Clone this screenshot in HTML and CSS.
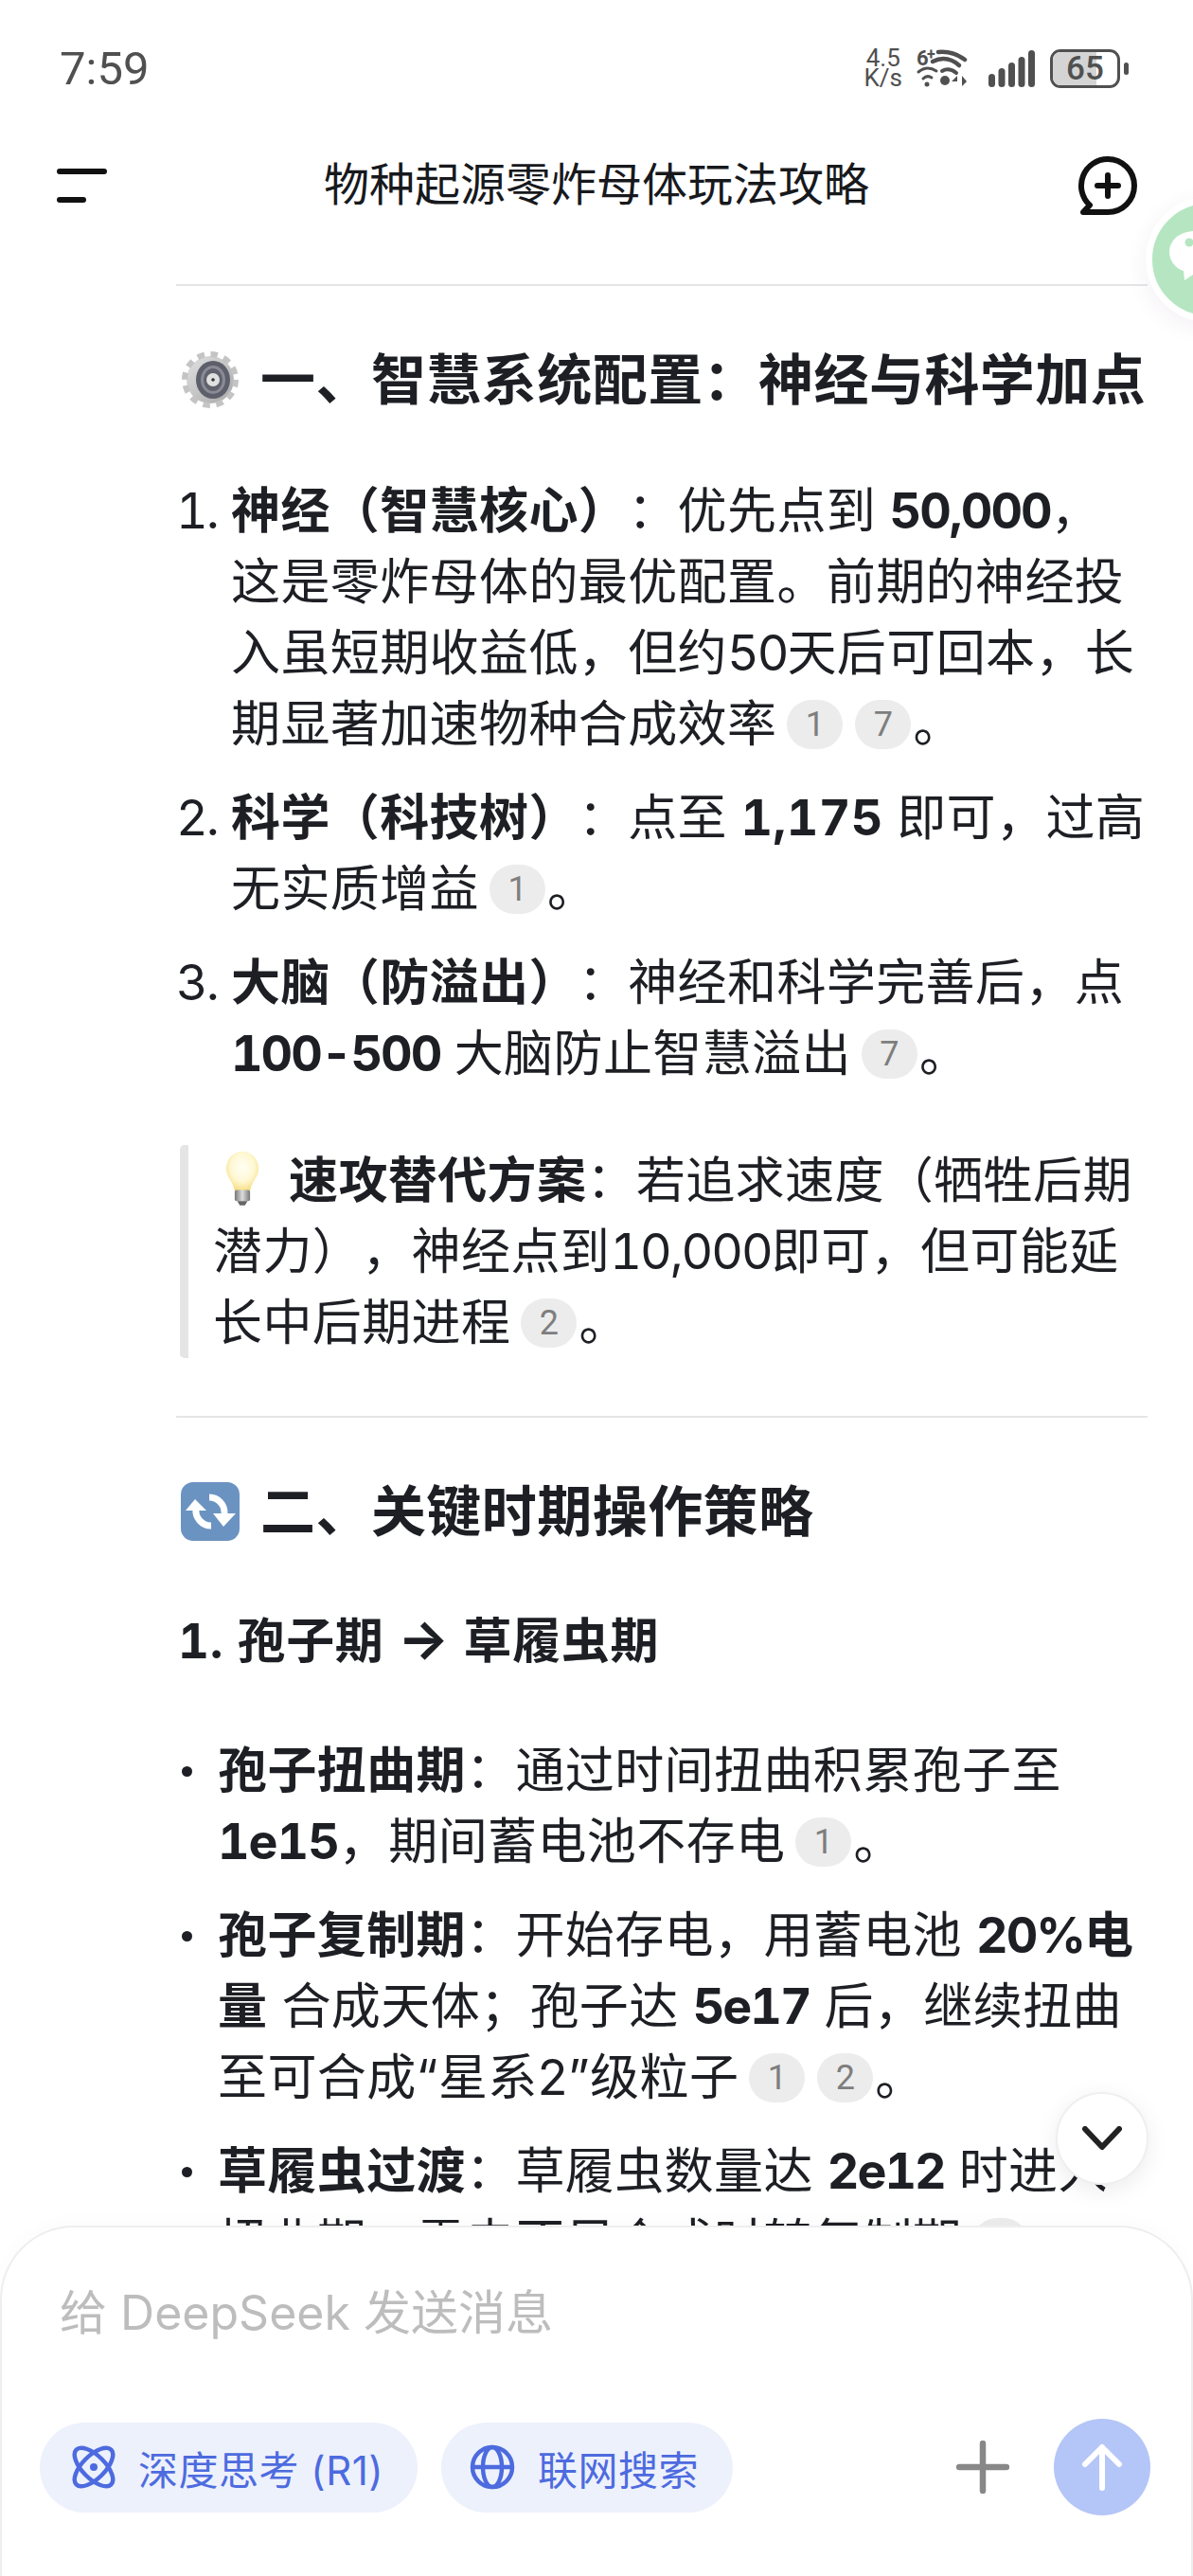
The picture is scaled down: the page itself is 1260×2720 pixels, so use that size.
FILE: index.html
```html
<!DOCTYPE html>
<html lang="zh-CN">
<head>
<meta charset="utf-8">
<title>物种起源零炸母体玩法攻略</title>
<link rel="stylesheet" href="styles.css">
</head>
<body>
<div class="phone">
  <div class="status">
    <span class="time">7:59</span>
    <div class="status-icons">
      <span class="speed"><span>4.5</span><span>K/s</span></span>
      <svg class="wifi" width="54" height="40" viewBox="0 0 54 40"><text x="0" y="17" class="six">6</text><text x="11" y="11" class="plus">+</text><g fill="none" stroke="#505050" stroke-linecap="round"><path d="M23 3 C33 2 43 5 51 11" stroke-width="4.5"/><path d="M17 13 C27 8 37 10 45 17" stroke-width="4.5"/><path d="M27 23 C32 20 37 21 42 25" stroke-width="4"/><path d="M2 24 C8 19 15 19 21 23" stroke-width="3"/><path d="M7 31 C10 28 13 28 16 30" stroke-width="3"/></g><circle cx="11" cy="37" r="2.5" fill="#505050"/><circle cx="30" cy="33" r="5" fill="#505050"/><path d="M43 28 L37 34 H43Z M48 28 V39 L53 34Z" fill="#505050"/></svg>
      <svg class="signal" width="49" height="39" viewBox="0 0 49 39"><g fill="#505050"><rect x="0" y="25" width="7" height="14" rx="3.5"/><rect x="10.500" y="19" width="7" height="20" rx="3.5"/><rect x="21" y="13" width="7" height="26" rx="3.5"/><rect x="31.500" y="7" width="7" height="32" rx="3.5"/><rect x="42" y="0" width="7" height="39" rx="3.5"/></g></svg>
      <div class="battery"><div class="battery-fill"></div><span class="battery-num">65</span></div>
      <span class="battery-tip"></span>
    </div>
  </div>

  <header class="topbar">
    <svg class="menu" width="56" height="36" viewBox="0 0 56 36"><path d="M6 3 H53 M6 33 H31" stroke="#111" stroke-width="6" stroke-linecap="round"/></svg>
    <h1 class="title">物种起源零炸母体玩法攻略</h1>
    <svg class="newchat" width="64" height="62" viewBox="0 0 64 62"><path d="M32 3 A28 28 0 1 1 32 59 H6 L13 51.600 A28 28 0 0 1 32 3 Z" fill="none" stroke="#111" stroke-width="6" stroke-linejoin="round"/><path d="M32 20 V42 M21 31 H43" stroke="#111" stroke-width="6" stroke-linecap="round"/></svg>
  </header>

  <main class="content">
    <hr class="rule rule-first">
    <h2 class="h2">
      <svg class="emoji" width="66" height="66" viewBox="0 0 66 66">
        <defs><linearGradient id="g1" x1="0" y1="0" x2="1" y2="1"><stop offset="0" stop-color="#e2e2e2"/><stop offset="1" stop-color="#a8a8a8"/></linearGradient></defs>
        <circle cx="33" cy="33" r="25" fill="url(#g1)"/>
        <circle cx="33" cy="33" r="27" fill="none" stroke="#c4c4c4" stroke-width="6" stroke-dasharray="7.500 6.640"/>
        <ellipse cx="36" cy="33" rx="18" ry="20" fill="#5d5f6b"/>
        <ellipse cx="36" cy="33" rx="13" ry="15" fill="#8a8b96"/>
        <ellipse cx="36" cy="33" rx="10" ry="12" fill="#5f616c"/>
        <circle cx="36" cy="33" r="7" fill="#e0e0e0"/>
        <circle cx="36" cy="33" r="1.800" fill="#333"/>
      </svg>
      <span>一、智慧系统配置：神经与科学加点</span>
    </h2>

    <ol class="olist">
      <li><b>神经（智慧核心）</b>：优先点到 <b class="num">50,000</b>，这是零炸母体的最优配置。前期的神经投入虽短期收益低，但约<span class="num">50</span>天后可回本，长期显著加速物种合成效率<span class="cite">1</span><span class="cite">7</span>。</li>
      <li><b>科学（科技树）</b>：点至 <b>1,175</b> 即可，过高无实质增益<span class="cite">1</span>。</li>
      <li><b>大脑（防溢出）</b>：神经和科学完善后，点 <b class="num">100-500</b> 大脑防止智慧溢出<span class="cite">7</span>。</li>
    </ol>

    <blockquote class="quote">
      <svg class="emoji-bulb" width="36" height="58" viewBox="0 0 40 64">
        <defs><radialGradient id="g2" cx=".5" cy=".4" r=".6"><stop offset="0" stop-color="#fffef5"/><stop offset=".6" stop-color="#fff8d4"/><stop offset="1" stop-color="#f6df85"/></radialGradient><linearGradient id="g3" x1="0" y1="0" x2="1" y2="0"><stop offset="0" stop-color="#777"/><stop offset=".5" stop-color="#ddd"/><stop offset="1" stop-color="#777"/></linearGradient></defs>
        <path d="M20 1 C31 1 39 10 39 21 C39 31 31 36 29 47 H11 C9 36 1 31 1 21 C1 10 9 1 20 1 Z" fill="url(#g2)"/>
        <rect x="11" y="46" width="18" height="13" rx="2" fill="url(#g3)"/>
        <path d="M14 59 H26 L23 64 H17 Z" fill="#666"/>
      </svg><b>速攻替代方案</b>：若追求速度（牺牲后期潜力），神经点到<span class="num">10,000</span>即可，但可能延长中后期进程<span class="cite">2</span>。
    </blockquote>

    <hr class="rule rule-second">
    <h2 class="h2">
      <svg class="emoji" width="66" height="66" viewBox="0 0 66 66">
        <rect x="2" y="2" width="62" height="62" rx="13" fill="#6b93c2"/>
        <g transform="translate(2 2)">
          <g fill="none" stroke="#fff" stroke-width="7"><path d="M16 28 A16 16 0 0 0 32 46"/><path d="M46 33 A16 16 0 0 0 30 16"/></g>
          <path d="M5 30 L15 18 L27 30 Z M58 33 L45 47 L34 33 Z" fill="#fff"/>
        </g>
      </svg>
      <span>二、关键时期操作策略</span>
    </h2>
    <h3 class="h3">1. 孢子期 <span class="arrow">→</span> 草履虫期</h3>
    <ul class="ulist">
      <li><b>孢子扭曲期</b>：通过时间扭曲积累孢子至 <b class="num num-mid">1e15</b>，期间蓄电池不存电<span class="cite">1</span>。</li>
      <li><b>孢子复制期</b>：开始存电，用蓄电池 <b><span class="num">20%</span>电量</b> 合成天体；孢子达 <b class="num">5e17</b> 后，继续扭曲至可合成“星系2”级粒子<span class="cite">1</span><span class="cite">2</span>。</li>
      <li><b>草履虫过渡</b>：草履虫数量达 <b class="num">2e12</b> 时进入扭曲期，需电不足合成时转复制期<span class="cite">1</span>。</li>
    </ul>
  </main>

  <button class="scroll-down" type="button" aria-label="向下滚动">
    <svg width="42" height="26" viewBox="0 0 42 26"><path d="M3 3 L21 22 L39 3" fill="none" stroke="#222" stroke-width="6" stroke-linecap="round" stroke-linejoin="round"/></svg>
  </button>

  <div class="float-ball">
    <svg width="56" height="56" viewBox="0 0 56 56"><path d="M28 1 C44 1 56 10 56 23 C56 36 44 45 28 45 L16 53 L15 43 C6 40 0 32 0 23 C0 10 12 1 28 1 Z" fill="#fff"/><circle cx="21" cy="13" r="4.500" fill="#b5e6c1"/></svg>
  </div>

  <footer class="composer">
    <div class="placeholder">给 DeepSeek 发送消息</div>
    <div class="actions">
      <div class="chip">
        <svg width="46" height="46" viewBox="0 0 46 46"><g fill="none" stroke="#4d6bdf" stroke-width="4.500"><ellipse cx="23" cy="23" rx="12" ry="26" transform="rotate(45 23 23)"/><ellipse cx="23" cy="23" rx="12" ry="26" transform="rotate(-45 23 23)"/></g><circle cx="23" cy="23" r="4" fill="#4d6bdf"/></svg>
        <span>深度思考 (R1)</span>
      </div>
      <div class="chip chip-web">
        <svg width="48" height="48" viewBox="0 0 48 48"><g fill="none" stroke="#4d6bdf" stroke-width="4.500"><circle cx="24" cy="24" r="21"/><ellipse cx="24" cy="24" rx="10" ry="21"/><path d="M3 24 H45"/></g></svg>
        <span>联网搜索</span>
      </div>
      <div class="spacer"></div>
      <svg class="plus-btn" width="56" height="56" viewBox="0 0 56 56"><path d="M28 3 V53 M3 28 H53" stroke="#888" stroke-width="6.500" stroke-linecap="round"/></svg>
      <div class="send">
        <svg width="44" height="50" viewBox="0 0 44 50"><path d="M22 47 V4 M4 22 L22 4 L40 22" fill="none" stroke="#fff" stroke-width="6" stroke-linecap="round" stroke-linejoin="round"/></svg>
      </div>
    </div>
  </footer>
</div>
</body>
</html>
```
FILE: styles.css
```css
* { box-sizing: border-box; }
html, body { margin: 0; padding: 0; }
body { background: #fff; font-family: "Inter", "Noto Sans CJK SC", sans-serif; color: #1d1f24; text-spacing-trim: space-all; }
.phone { position: relative; width: 1260px; height: 2720px; overflow: hidden; background: #fff; }

.status { display: flex; align-items: center; justify-content: space-between; height: 144px; padding: 0 68px 0 63px; }
.time { font-family: "Roboto", sans-serif; font-size: 49px; color: #505050; }
.status-icons { display: flex; align-items: center; color: #505050; }
.speed { display: flex; flex-direction: column; font-family: "Roboto", sans-serif; font-size: 26px; line-height: 21px; align-items: center; margin-right: 15px; }
.wifi { overflow: visible; }
.six { font: 700 22px "Roboto", sans-serif; fill: #505050; }
.plus { font: 700 16px "Roboto", sans-serif; fill: #505050; }
.signal { margin-left: 22px; }
.battery { position: relative; margin-left: 16px; width: 74px; height: 41px; border: 3.5px solid #505050; border-radius: 11px; overflow: hidden; display: flex; align-items: center; justify-content: center; }
.battery-fill { position: absolute; left: 0; top: 0; bottom: 0; width: 68%; background: #d4d4d4; }
.battery-num { position: relative; font-family: "Roboto", sans-serif; font-size: 35px; font-weight: 500; color: #505050; line-height: 1; }
.battery-tip { display: block; margin-left: 4px; width: 5px; height: 13px; border-radius: 3px; background: #505050; }

.topbar { display: flex; align-items: center; justify-content: space-between; height: 104px; padding: 0 58px 0 57px; }
.title { margin: 0 0 10px 9px; font-size: 48px; font-weight: 400; color: #17191d; }

.content { padding: 0 48px 0 186px; }
.rule { border: 0; height: 2px; background: #e5e5e7; margin: 0; }
.rule-first { margin-top: 52px; }
.rule-second { margin-top: 61px; }

.h2 { margin: 64px 0 0 3px; display: flex; align-items: center; gap: 20px; font-size: 58px; font-weight: 700; line-height: 70px; letter-spacing: .45px; white-space: nowrap; }
.emoji { flex: none; }

.olist { list-style: none; counter-reset: n; margin: 66px 0 0; padding: 0 0 0 58px; font-size: 52px; line-height: 75px; letter-spacing: .4px; font-variant-numeric: tabular-nums; }
.olist li { counter-increment: n; position: relative; margin-bottom: 24px; }
.olist li::before { content: counter(n) "."; position: absolute; left: -58px; top: 0; letter-spacing: -2px; }
b { font-weight: 700; }
.num { letter-spacing: -2px; font-variant-numeric: tabular-nums; }
.num-mid { letter-spacing: -1px; }

.cite { display: inline-flex; align-items: center; justify-content: center; width: 59px; height: 52px; margin: -10px 2px -10px 11px; vertical-align: 6px; border-radius: 26px; background: #ececec; color: #7e7e7e; font-size: 36px; line-height: 1; letter-spacing: 0; font-family: "Roboto", sans-serif; }

.quote { margin: 59px 0 0 4px; padding: 0 0 0 26px; border-left: 9px solid #e5e5e5; border-radius: 5px; font-size: 52px; line-height: 75px; letter-spacing: .4px; }
.emoji-bulb { vertical-align: -8px; margin: 0 31px 0 13px; }

.h3 { margin: 67px 0 0 2px; font-size: 51px; line-height: 70px; font-weight: 700; letter-spacing: .7px; font-variant-numeric: tabular-nums; }
.arrow { font-size: 57px; line-height: 1; }
.ulist { list-style: none; margin: 64px 0 0; padding: 0 0 0 44px; font-size: 52px; line-height: 75px; letter-spacing: .4px; }
.ulist li { position: relative; margin-bottom: 24px; }
.ulist li::before { content: ""; position: absolute; left: -38px; top: 33px; width: 11px; height: 11px; border-radius: 50%; background: #1d1f24; }

.scroll-down { position: absolute; left: 1115px; top: 2209px; width: 98px; height: 98px; border-radius: 50%; background: #fff; border: 2px solid #efefef; box-shadow: 0 6px 24px rgba(0,0,0,.08); display: flex; align-items: center; justify-content: center; padding: 0; z-index: 3; }

.float-ball { position: absolute; left: 1210px; top: 208px; width: 132px; height: 132px; border-radius: 50%; background: #b5e6c1; border: 7px solid #fff; box-shadow: 0 6px 22px rgba(120,70,120,.08); padding: 28px 0 0 18px; }
.float-ball svg { display: block; }

.composer { position: absolute; left: 0; right: 0; top: 2350px; height: 370px; background: #fff; border: 2px solid #eee; border-bottom: 0; border-radius: 78px 78px 0 0; padding: 0 43px 0 40px; box-shadow: 0 -6px 18px rgba(0,0,0,.015); z-index: 2; }
.placeholder { margin: 55px 0 0 21px; font-size: 50px; line-height: 70px; color: #bdbdbd; }
.actions { display: flex; align-items: center; margin-top: 77px; }
.chip { display: flex; align-items: center; gap: 24px; height: 95px; padding: 0 36px 0 34px; border-radius: 48px; background: #edf1fc; color: #4d6bdf; font-size: 42px; letter-spacing: .5px; margin-right: 25px; white-space: nowrap; }
.chip-web { padding-left: 30px; }
.spacer { flex: 1; }
.plus-btn { margin-right: 47px; }
.send { width: 102px; height: 102px; border-radius: 50%; background: #b4c5f7; display: flex; align-items: center; justify-content: center; }
```
